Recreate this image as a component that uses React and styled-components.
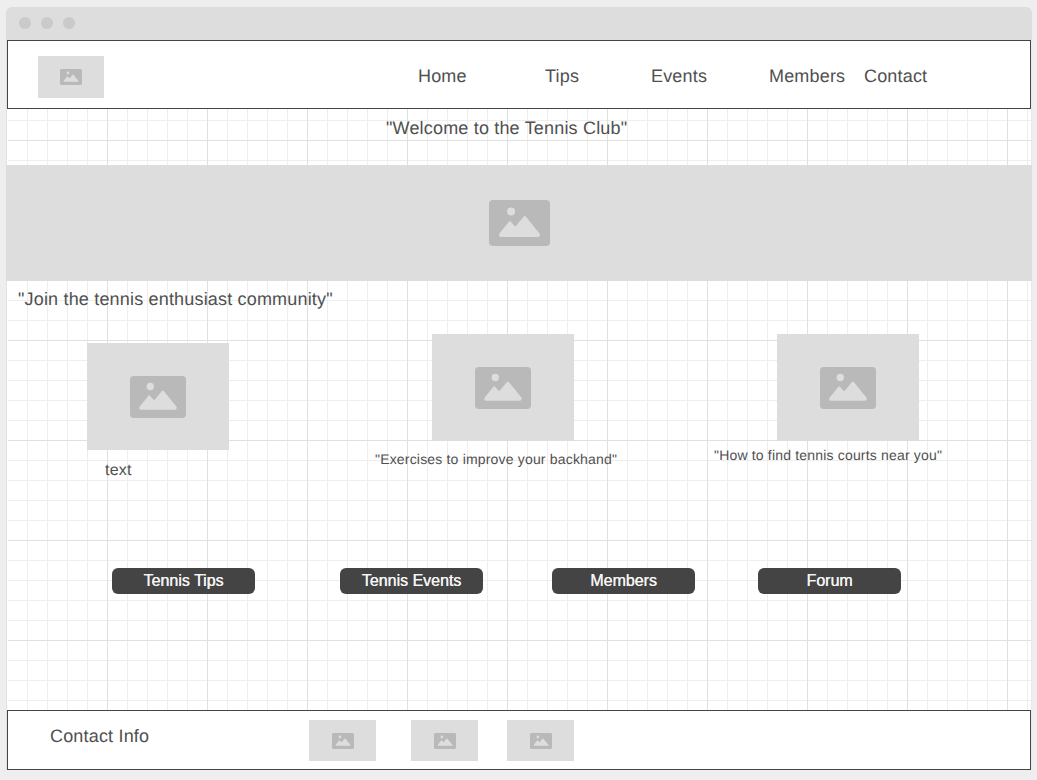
import React from "react";
import styled, { createGlobalStyle } from "styled-components";

const GlobalStyle = createGlobalStyle`
  * { box-sizing: border-box; }
  body {
    margin: 0;
    background: #eee;
    font-family: "Liberation Sans", Arial, sans-serif;
    color: #505050;
    text-rendering: geometricPrecision;
  }
`;

const Page = styled.div`
  height: 780px;
  padding: 7px 5px 10px 6px;
  overflow: hidden;
`;

const BrowserWindow = styled.div`
  width: 1026px;
  height: 763px;
  border-radius: 6px 6px 0 0;
  background: linear-gradient(#e2e2e2, #e2e2e2) 0 33px / 1px 100% no-repeat,
    linear-gradient(#e9e9e9, #e9e9e9) 1025px 33px / 1px 100% no-repeat;
`;

const TitleBar = styled.div`
  display: flex;
  gap: 10px;
  height: 33px;
  padding: 10px 13px;
  border-radius: 6px 6px 0 0;
  background: #ddd;
`;

const Dot = styled.span`
  width: 12px;
  height: 12px;
  border-radius: 50%;
  background: #cacaca;
`;

const Canvas = styled.div`
  display: flex;
  flex-direction: column;
  width: 1024px;
  height: 730px;
  margin-left: 1px;
  background:
    linear-gradient(#fff, #fff) 0 0 / 1px 100% no-repeat,
    linear-gradient(#e0e0e0 1px, transparent 1px) 0 0 / 100px 100px,
    linear-gradient(90deg, #e0e0e0 1px, transparent 1px) 0 0 / 100px 100px,
    linear-gradient(#eee 1px, transparent 1px) 0 0 / 20px 20px,
    linear-gradient(90deg, #eee 1px, transparent 1px) 0 0 / 20px 20px,
    #fff;
`;

const Header = styled.header`
  display: flex;
  flex: none;
  height: 69px;
  padding: 15px 0 0 30px;
  border: 1px solid #444;
  background: #fff;
`;

const Nav = styled.nav`
  display: flex;
  padding: 10px 0 0 314px;
`;

const NavItem = styled.a`
  width: ${(p) => p.$width}px;
  font-size: 18px;
  line-height: 20px;
  letter-spacing: 0.18px;
  white-space: nowrap;
`;

const Welcome = styled.h1`
  height: 56px;
  flex: none;
  margin: 0;
  padding: 9px 0 0 379px;
  font-size: 18px;
  font-weight: 400;
  line-height: 20px;
  letter-spacing: 0.18px;
`;

const Placeholder = styled.div`
  display: flex;
  flex: none;
  align-items: center;
  justify-content: center;
  width: ${(p) => p.$width}px;
  height: ${(p) => p.$height}px;
  background: #ddd;
`;

const Banner = styled(Placeholder)`
  margin-left: -1px;
  padding-left: 1px;
`;

const Tagline = styled.h2`
  flex: none;
  height: 53px;
  margin: 0;
  padding: 8px 0 0 11px;
  font-size: 18px;
  font-weight: 400;
  line-height: 20px;
  letter-spacing: 0.18px;
`;

const Cards = styled.section`
  display: grid;
  grid-template-columns: 288px 339px 1fr;
  flex: none;
  height: 234px;
  padding-left: 80px;
`;

const Card = styled.figure`
  margin: 0;
  padding-top: ${(p) => p.$top || 0}px;
`;

const CardImage = styled(Placeholder)`
  margin-left: ${(p) => p.$indent}px;
`;

const Caption = styled.figcaption`
  padding: ${(p) => p.$top}px 0 0 ${(p) => p.$indent || 0}px;
  font-size: ${(p) => p.$size}px;
  line-height: 18px;
  letter-spacing: 0.18px;
  white-space: nowrap;
`;

const Actions = styled.div`
  display: grid;
  grid-template-columns: 228px 212px 206px 143px;
  flex: none;
  height: 142px;
  padding-left: 105px;
`;

const Button = styled.button`
  width: 143px;
  height: 26px;
  padding: 0;
  border: 0;
  border-radius: 6px;
  background: #444;
  color: #f5f5f5;
  font-family: inherit;
  font-size: 16px;
  line-height: 26px;
  text-shadow: 0.3px 0 0 #eee;
`;

const Footer = styled.footer`
  display: flex;
  flex: none;
  height: 60px;
  padding: 9px 0 0 42px;
  border: 1px solid #444;
  background: #fff;
`;

const Contact = styled.p`
  width: 259px;
  margin: 0;
  padding-top: 6px;
  font-size: 18px;
  line-height: 20px;
  letter-spacing: 0.18px;
`;

const Socials = styled.div`
  display: grid;
  grid-template-columns: 102px 96px 67px;
`;

function ImageIcon({ width, height }) {
  return (
    <svg width={width} height={height} viewBox="0 0 61 46" preserveAspectRatio="none">
      <rect width="61" height="46" rx="4" fill="#b9b9b9" />
      <circle cx="22.1" cy="11.5" r="4" fill="#ddd" />
      <path
        d="M10.8 33 L19.9 21.8 Q20.8 20.6 21.8 21.7 L25.2 25.6 Q26.3 26.8 27.4 25.6 L34.6 16.7 Q35.8 15.2 37 16.7 L50.3 33.2 C51.8 35 50.6 37 48.8 37 L12 37 C10 37 9.4 34.8 10.8 33 Z"
        fill="#ddd"
      />
    </svg>
  );
}

const links = [
  ["Home", 127],
  ["Tips", 106],
  ["Events", 118],
  ["Members", 95],
  ["Contact", 80],
];

export default function App() {
  return (
    <>
      <GlobalStyle />
      <Page>
        <BrowserWindow>
          <TitleBar>
            <Dot />
            <Dot />
            <Dot />
          </TitleBar>
          <Canvas>
            <Header>
              <Placeholder $width={66} $height={42}>
                <ImageIcon width={22} height={16} />
              </Placeholder>
              <Nav>
                {links.map(([label, width]) => (
                  <NavItem key={label} $width={width}>{label}</NavItem>
                ))}
              </Nav>
            </Header>
            <Welcome>"Welcome to the Tennis Club"</Welcome>
            <Banner $width={1026} $height={116}>
              <ImageIcon width={61} height={46} />
            </Banner>
            <Tagline>"Join the tennis enthusiast community"</Tagline>
            <Cards>
              <Card $top={9}>
                <CardImage $width={142} $height={107} $indent={0}>
                  <ImageIcon width={56} height={42} />
                </CardImage>
                <Caption $size={16} $top={12} $indent={18}>text</Caption>
              </Card>
              <Card>
                <CardImage $width={142} $height={107} $indent={57}>
                  <ImageIcon width={56} height={42} />
                </CardImage>
                <Caption $size={14} $top={9}>"Exercises to improve your backhand"</Caption>
              </Card>
              <Card>
                <CardImage $width={142} $height={107} $indent={63}>
                  <ImageIcon width={56} height={42} />
                </CardImage>
                <Caption $size={14} $top={5}>"How to find tennis courts near you"</Caption>
              </Card>
            </Cards>
            <Actions>
              <Button>Tennis Tips</Button>
              <Button>Tennis Events</Button>
              <Button>Members</Button>
              <Button>Forum</Button>
            </Actions>
            <Footer>
              <Contact>Contact Info</Contact>
              <Socials>
                {[0, 1, 2].map((n) => (
                  <Placeholder key={n} $width={67} $height={41}>
                    <ImageIcon width={22} height={16} />
                  </Placeholder>
                ))}
              </Socials>
            </Footer>
          </Canvas>
        </BrowserWindow>
      </Page>
    </>
  );
}
